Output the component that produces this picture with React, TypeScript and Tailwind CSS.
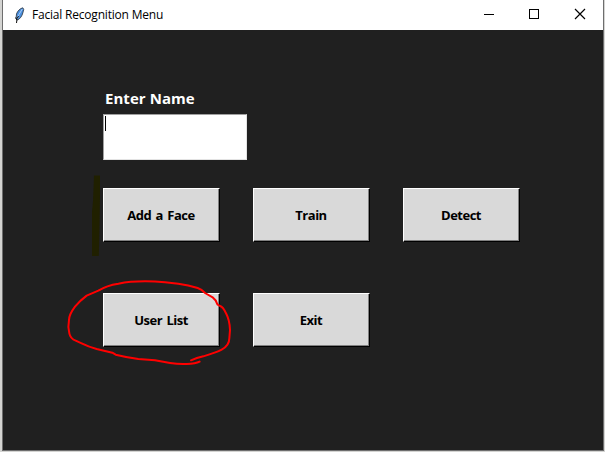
import type { ReactNode } from "react";

function TkButton({ children }: { children: ReactNode }) {
  return (
    <button className="h-[54px] w-[117px] border border-t-white border-l-white border-r-black border-b-black bg-[#d9d9d9]">
      <span className="flex h-full w-full items-center justify-center border-r border-b border-[#808080] pt-px text-[13px] leading-none font-bold text-black">
        <span className="tracking-[-0.5px] whitespace-nowrap [word-spacing:1.5px]">{children}</span>
      </span>
    </button>
  );
}

function Feather() {
  return (
    <svg width="12" height="17" viewBox="0 0 12 17" fill="none">
      <path d="M8.8 .8C6 1.5 3.5 4 2.5 7L2 12l1.5 1C6 12 8 9 8.8 6L9.7 2.4Z" fill="#4a8fe0" stroke="#34404c" strokeWidth=".9" />
      <path d="M8.3 2 5 7.5 3 12" stroke="#a9cdf2" strokeWidth="1" />
      <path d="M4.6 9 3 11.5 2.5 16M1.6 10.5 3 13" stroke="#111" strokeWidth="1" />
    </svg>
  );
}

export default function App() {
  return (
    <div className="h-[452px] w-[605px] overflow-hidden bg-[#d4d4d2] pr-px pb-px pl-[2px] font-['Open_Sans','Noto_Sans',sans-serif]">
      <div className="flex h-[451px] flex-col border-r border-b border-l border-[#6e6e6e] bg-[#202020]">
        <header className="flex h-[30px] shrink-0 items-center justify-between bg-white">
          <div className="flex items-center pl-[11px]">
            <Feather />
            <span className="ml-[6px] text-[12px] leading-[30px] tracking-[-0.2px] whitespace-nowrap text-black">
              Facial Recognition Menu
            </span>
          </div>
          <svg width="138" height="30" viewBox="465 0 138 30" fill="none" stroke="black" strokeWidth="1">
            <path d="M484 14.5h10M529.5 9.5h9v9h-9z" shapeRendering="crispEdges" />
            <path d="m575 9 10 10M585 9l-10 10" strokeWidth="1.2" />
          </svg>
        </header>
        <main className="relative flex-1 pl-[100px]">
          <label className="block pt-[57px] pl-[2px] text-[15px] leading-[22px] font-bold tracking-[0.05px] text-white">
            Enter Name
          </label>
          <div className="mt-[5px] h-[46px] w-[144px] border border-t-[#a0a0a0] border-l-[#a0a0a0] border-r-[#e3e3e3] border-b-[#e3e3e3] bg-white pt-px pl-px">
            <div className="h-[15px] w-px bg-black" />
          </div>
          <div className="mt-[28px] grid grid-cols-[117px_117px_117px] gap-x-[33px] gap-y-[51px]">
            <TkButton>Add a Face</TkButton>
            <TkButton>Train</TkButton>
            <TkButton>Detect</TkButton>
            <TkButton>User List</TkButton>
            <TkButton>Exit</TkButton>
          </div>
          <svg className="absolute top-[145px] left-[88px]" width="14" height="84" viewBox="91 175 14 84">
            <path d="M94 175.5h6V195l-.5 30-.7 31H92V212l1-11Z" fill="#202000" />
          </svg>
          <svg
            className="pointer-events-none absolute top-[240px] left-[52px]"
            width="190"
            height="105"
            viewBox="0 0 570 315"
            fill="none"
            stroke="#ff0000"
            strokeWidth="6"
            strokeLinecap="round"
            strokeLinejoin="round"
          >
            <path d="M408 271Q425 263 445 259Q485 247 500 239Q523 227 523 205L525 180Q524 150 513 130Q504 110 495 108L487 103Q483 89 473 82L450 69Q440 58 428 54Q400 45 370 41L330 37Q300 34 270 34Q225 34 190 41Q155 46 130 62L95 77Q75 92 60 110Q42 134 42 150Q38 170 43 190Q46 206 62 212L80 220Q100 230 125 237L172 248L182 254Q215 262 250 267L300 271L345 279Q370 283 395 282Q422 281 434 275" />
          </svg>
        </main>
      </div>
    </div>
  );
}
